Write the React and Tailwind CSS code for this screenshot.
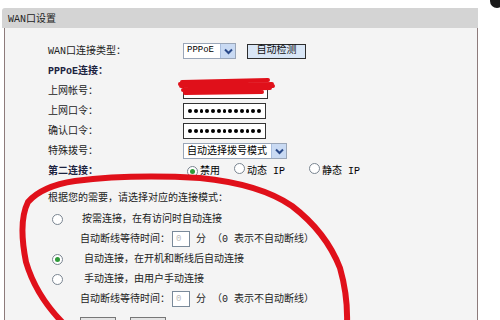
const font = { fontFamily: '"Liberation Mono", "Noto Sans CJK SC", monospace' };

const Radio = ({ checked }) => (
  <span className="inline-flex items-center justify-center w-[11px] h-[11px] rounded-full border border-[#7a8591] bg-white shrink-0">
    {checked && <span className="w-[5px] h-[5px] rounded-full bg-[#2f9a3a]" />}
  </span>
);

const Arrow = () => (
  <span className="flex items-center justify-center w-[15px] h-[14px] bg-[#c9daf3] border-l border-[#a9bede]">
    <svg width="9" height="7" viewBox="0 0 9 7">
      <path d="M1 1.5 L4.5 5 L8 1.5" fill="none" stroke="#2a4a8a" strokeWidth="2" />
    </svg>
  </span>
);

const Dots = () => (
  <div className="flex items-center gap-[2px] px-[4px] w-[83px] h-[16px] bg-white border border-[#333]">
    {Array.from({ length: 13 }).map((_, i) => (
      <span key={i} className="w-[4px] h-[4px] rounded-full bg-black" />
    ))}
  </div>
);

const Row = ({ label, bold, h = "h-[20px]", children }) => (
  <div className={`flex items-center ${h}`}>
    <div className={`w-[135px] ${bold ? "font-bold text-[#1c2340]" : "text-[#222]"}`}>{label}</div>
    <div className="flex items-center">{children}</div>
  </div>
);

const WaitRow = () => (
  <div className="flex items-center h-[20px] pl-[32px] text-[#222]">
    <span>自动断线等待时间：</span>
    <span className="ml-[2px] w-[18px] h-[16px] bg-white border border-[#7a8a9a] text-[#bbb] text-[9px] pl-[3px] leading-[14px]">0</span>
    <span className="ml-[6px]">分 （0 表示不自动断线）</span>
  </div>
);

export default function App() {
  return (
    <div className="relative w-[500px] h-[320px] bg-white overflow-hidden text-[10px]" style={font}>
      <div className="pt-[8px] pl-[2px] flex flex-col h-full">
        <div className="w-[476px] h-[20px] shrink-0 bg-[#d4d4d4] rounded-tl-[3px] flex items-center pl-[6px] pt-[2px] text-[10px] text-[#222]">
          WAN口设置
        </div>
        <div className="ml-[2px] w-[474px] flex-1 bg-[#f4f4f4] border-l border-r border-[#8d7b7b] pl-[43px] pt-[13px]">
          <Row label="WAN口连接类型：">
            <div className="flex items-center justify-between w-[53px] h-[16px] bg-white border border-[#9aa6b8] pl-[3px] text-[9px]">
              <span>PPPoE</span>
              <Arrow />
            </div>
            <button className="ml-[11px] w-[59px] h-[15px] bg-[#d9e6f6] border border-[#2d2d2d] text-[10px] leading-[12px] text-[#111]">
              自动检测
            </button>
          </Row>
          <Row label="PPPoE连接：" bold />
          <Row label="上网帐号：">
            <div className="w-[85px] h-[16px] bg-white border border-[#333]" />
          </Row>
          <Row label="上网口令：">
            <Dots />
          </Row>
          <Row label="确认口令：">
            <Dots />
          </Row>
          <Row label="特殊拨号：">
            <div className="flex items-center justify-between w-[104px] h-[16px] bg-white border border-[#9aa6b8] pl-[3px]">
              <span>自动选择拨号模式</span>
              <Arrow />
            </div>
          </Row>
          <Row label="第二连接：" bold h="h-[20px]">
            <div className="flex items-center pl-[4px]">
              <Radio checked />
              <span className="ml-[2px]">禁用</span>
              <span className="ml-[14px]"><Radio /></span>
              <span className="ml-[2px]">动态 IP</span>
              <span className="ml-[24px]"><Radio /></span>
              <span className="ml-[2px]">静态 IP</span>
            </div>
          </Row>
          <div className="flex items-center h-[22px] mt-[6px] text-[#222]">根据您的需要，请选择对应的连接模式：</div>
          <div className="flex items-center h-[20px] pl-[4px] text-[#222]">
            <Radio />
            <span className="ml-[19px]">按需连接，在有访问时自动连接</span>
          </div>
          <WaitRow />
          <div className="flex items-center h-[20px] pl-[4px] text-[#222]">
            <Radio checked />
            <span className="ml-[21px]">自动连接，在开机和断线后自动连接</span>
          </div>
          <div className="flex items-center h-[20px] pl-[4px] text-[#222]">
            <Radio />
            <span className="ml-[21px]">手动连接，由用户手动连接</span>
          </div>
          <WaitRow />
          <div className="flex gap-[14px] pl-[32px] mt-[8px]">
            <div className="w-[36px] h-[16px] bg-[#e4e4e4] border border-[#777]" />
            <div className="w-[36px] h-[16px] bg-[#e4e4e4] border border-[#777]" />
          </div>
        </div>
      </div>

      <div className="absolute -top-[6px] -right-[4px] w-[14px] h-[14px] rounded-full bg-[#1a1a1a]" />

      <svg className="absolute inset-0 pointer-events-none" width="500" height="320" viewBox="0 0 500 320">
        <g fill="none" stroke="#e0101a" strokeLinecap="round" strokeLinejoin="round">
          <path d="M182 82 L268 80 M181 86 L272 84 M183 90 L270 88 M185 93 L262 92 M180 84 Q230 80 273 86" strokeWidth="4" />
          <path d="M64 324 Q36 296 26 262 Q18 222 28 202 Q42 186 75 181 Q130 174 200 178 Q260 184 292 206 Q326 232 340 268 Q348 296 347 324" strokeWidth="6" />
        </g>
      </svg>
    </div>
  );
}
